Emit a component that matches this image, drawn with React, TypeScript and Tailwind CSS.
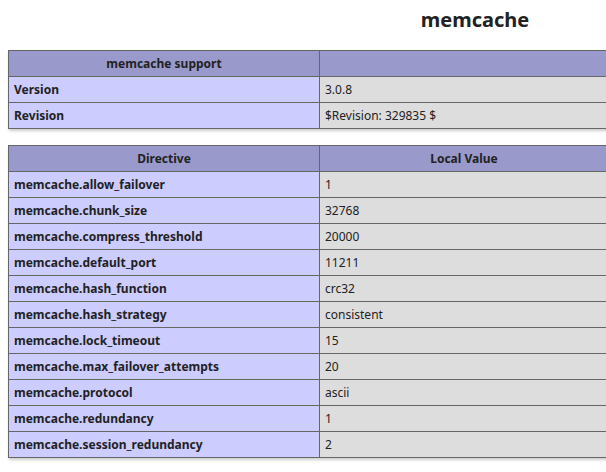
const font = { fontFamily: '"Noto Sans", "Open Sans", sans-serif' };

const support: [string, string][] = [
  ["Version", "3.0.8"],
  ["Revision", "$Revision: 329835 $"],
];

const directives: [string, string][] = [
  ["memcache.allow_failover", "1"],
  ["memcache.chunk_size", "32768"],
  ["memcache.compress_threshold", "20000"],
  ["memcache.default_port", "11211"],
  ["memcache.hash_function", "crc32"],
  ["memcache.hash_strategy", "consistent"],
  ["memcache.lock_timeout", "15"],
  ["memcache.max_failover_attempts", "20"],
  ["memcache.protocol", "ascii"],
  ["memcache.redundancy", "1"],
  ["memcache.session_redundancy", "2"],
];

function InfoTable({ head, rows }: { head: [string, string]; rows: [string, string][] }) {
  return (
    <table className="w-[601px] border-collapse text-[12px] leading-[17px] text-[#222] shadow-[1px_2px_3px_#ccc]">
      <thead>
        <tr className="bg-[#99c] font-bold">
          <th className="w-[311px] border border-[#666] px-[5px] py-[4px] text-center">{head[0]}</th>
          <th className="border border-[#666] px-[5px] py-[4px] text-center">{head[1]}</th>
        </tr>
      </thead>
      <tbody>
        {rows.map(([k, v]) => (
          <tr key={k}>
            <td className="w-[311px] border border-[#666] bg-[#ccf] px-[5px] py-[4px] text-left font-bold">{k}</td>
            <td className="border border-[#666] bg-[#ddd] px-[5px] py-[4px] text-left">{v}</td>
          </tr>
        ))}
      </tbody>
    </table>
  );
}

export default function App() {
  return (
    <div className="h-[472px] w-[606px] overflow-hidden bg-white" style={font}>
      <div className="pl-[8px]">
        <h2 className="w-[934px] pt-[6px] text-center text-[20px] font-bold leading-[28px] text-[#222]">
          memcache
        </h2>
        <div className="mt-[16px]">
          <InfoTable head={["memcache support", ""]} rows={support} />
        </div>
        <div className="mt-[16px]">
          <InfoTable head={["Directive", "Local Value"]} rows={directives} />
        </div>
      </div>
    </div>
  );
}
